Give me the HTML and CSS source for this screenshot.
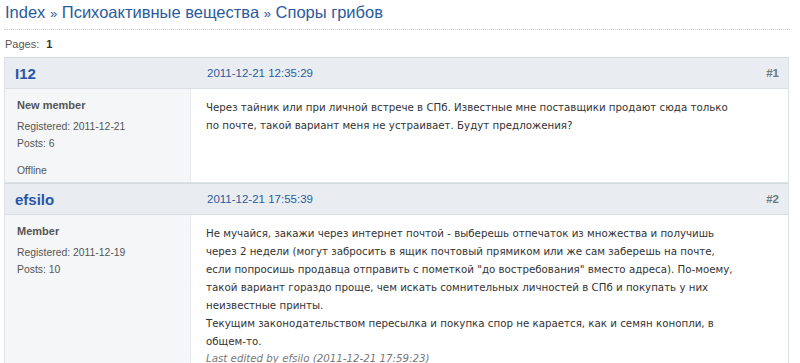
FILE: index.html
```html
<!DOCTYPE html>
<html>
<head>
<meta charset="utf-8">
<link rel="stylesheet" href="styles.css">
</head>
<body>

<div class="crumbs">
    <a href="#">Index</a> <span class="sep">»</span> <a href="#">Психоактивные вещества</a> <span class="sep">»</span> <a href="#">Споры грибов</a>
</div>

<div class="pages">Pages: <strong>1</strong></div>

<div class="post">
    <div class="post-head">
        <div class="author-name"><a href="#">I12</a></div>
        <div class="post-date"><a href="#">2011-12-21 12:35:29</a></div>
        <div class="post-num">#1</div>
    </div>
    <div class="post-body">
        <div class="author-info">
            <div class="title">New member</div>
            <div class="info-line">Registered: 2011-12-21</div>
            <div class="info-line">Posts: 6</div>
            <div class="status">Offline</div>
        </div>
        <div class="post-text">
            <p>Через тайник или при личной встрече в СПб. Известные мне поставщики продают сюда только<br>по почте, такой вариант меня не устраивает. Будут предложения?</p>
        </div>
    </div>
</div>

<div class="post">
    <div class="post-head">
        <div class="author-name"><a href="#">efsilo</a></div>
        <div class="post-date"><a href="#">2011-12-21 17:55:39</a></div>
        <div class="post-num">#2</div>
    </div>
    <div class="post-body">
        <div class="author-info">
            <div class="title">Member</div>
            <div class="info-line">Registered: 2011-12-19</div>
            <div class="info-line">Posts: 10</div>
        </div>
        <div class="post-text">
            <p>Не мучайся, закажи через интернет почтой - выберешь отпечаток из множества и получишь<br>через 2 недели (могут забросить в ящик почтовый прямиком или же сам заберешь на почте,<br>если попросишь продавца отправить с пометкой "до востребования" вместо адреса). По-моему,<br>такой вариант гораздо проще, чем искать сомнительных личностей в СПб и покупать у них<br>неизвестные принты.<br>Текущим законодательством пересылка и покупка спор не карается, как и семян конопли, в<br>общем-то.</p>
            <p class="edited">Last edited by efsilo (2011-12-21 17:59:23)</p>
        </div>
    </div>
</div>

</body>
</html>
```

FILE: styles.css
```css
body {
    margin: 0;
    padding: 0 11px 0 4px;
    background-color: white;
    font-family: "Liberation Sans", Arial, sans-serif;
    color: #333;
}

a {
    color: #2b5b9c;
    text-decoration: none;
}

.crumbs {
    height: 29px;
    line-height: 25px;
    padding-left: 1px;
    font-size: 16.5px;
    border-bottom: 1px dotted #c8c8c8;
    margin-right: -1px;
}

.crumbs .sep {
    color: #2b5b9c;
    font-size: 13px;
}

.pages {
    height: 27px;
    line-height: 28px;
    padding-left: 1px;
    font-size: 11px;
    color: #555;
}

.pages strong {
    margin-left: 4px;
    color: #333;
}

.post {
    border: 1px solid #dde2e7;
    border-top-color: #d4d9de;
}

.post-head {
    display: flex;
    align-items: center;
    height: 30px;
    background-color: #e9edf1;
    border-bottom: 1px solid #d9dfe5;
}

.author-name {
    width: 187px;
    padding-left: 10px;
    box-sizing: border-box;
    font-size: 15px;
    font-weight: bold;
}

.author-name a {
    color: #2a55a8;
}

.post-date {
    flex: 1;
    padding-left: 15px;
    font-size: 11.5px;
}

.post-num {
    padding-right: 9px;
    font-size: 11.5px;
    font-weight: bold;
    color: #6b7b80;
}

.post-body {
    display: flex;
}

.author-info {
    width: 186px;
    flex-shrink: 0;
    padding: 10px 10px 3px 12px;
    box-sizing: border-box;
    background-color: #f4f6f8;
    border-right: 1px solid #e6e9ec;
    font-size: 10.4px;
    color: #555;
}

.author-info .title {
    font-weight: bold;
    font-size: 11px;
    margin-bottom: 7px;
    color: #555;
}

.info-line {
    line-height: 17px;
}

.status {
    margin-top: 10px;
    line-height: 17px;
}

.post-text {
    flex: 1;
    padding: 9px 10px 0 15px;
    font-family: "DejaVu Sans", Verdana, sans-serif;
    font-size: 10.25px;
    line-height: 18px;
    color: #333;
}

.post-text p {
    margin: 0;
}

.post-text .edited {
    margin-top: 0;
    line-height: 16px;
    font-style: italic;
    color: #777;
}
```
